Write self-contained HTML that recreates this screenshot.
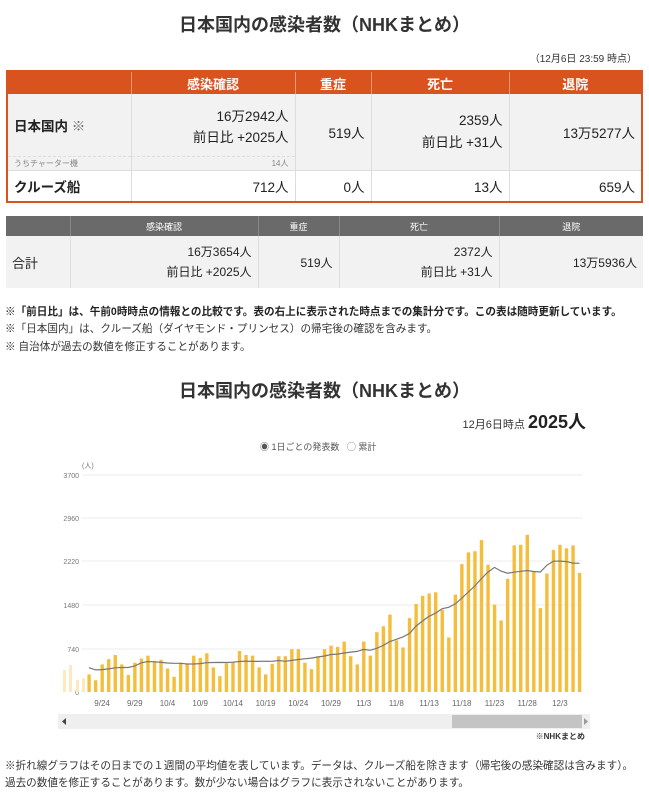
<!DOCTYPE html>
<html><head><meta charset="utf-8">
<style>
*{margin:0;padding:0;box-sizing:border-box}
body{width:649px;height:794px;background:#fff;font-family:"Liberation Sans","Noto Sans CJK JP",sans-serif;color:#222;position:relative;overflow:hidden}
.a{position:absolute;white-space:nowrap}
table{border-collapse:collapse;position:absolute}
td{padding:0 6px}
.t1{left:6px;top:70px;width:637px;border:2px solid #d9531e}
.t1 th{background:#d9531e;color:#fff;font-size:13px;height:23px;border-left:1px solid #e9966e}
.t1 td{font-size:13.5px}
.t2{left:6px;top:216px;width:637px}
.t2 th{background:#6a6a6a;color:#fff;font-size:9px;height:20px;font-weight:normal;border-left:1px solid #888}
.r{text-align:right}
.g td{background:#f2f2f2;border-left:1px solid #ddd}
.w td{border-left:1px solid #ddd;border-top:1px solid #ddd}
.note{font-size:10.6px;color:#333}
</style></head><body>
<div class="a" style="left:0;width:649px;text-align:center;top:11px;font-size:18px;font-weight:bold;color:#333">日本国内の感染者数（NHKまとめ）</div>
<div class="a" style="right:12px;top:50px;font-size:10px;color:#333">（12月6日 23:59 時点）</div>

<table class="t1">
<tr><th style="width:124px;border-left:none"></th><th style="width:164px">感染確認</th><th style="width:76px">重症</th><th style="width:138px">死亡</th><th>退院</th></tr>
<tr class="g"><td style="height:62px;font-weight:bold;border-left:none">日本国内 <span style="font-weight:normal;color:#666">※</span></td>
<td class="r" style="line-height:21px;padding-top:4px">16万2942人<br>前日比 +2025人</td>
<td class="r" rowspan="2">519人</td>
<td class="r" rowspan="2" style="line-height:22px">2359人<br>前日比 +31人</td>
<td class="r" rowspan="2">13万5277人</td></tr>
<tr class="g"><td style="height:14px;font-size:8px;color:#888;border-left:none;border-top:1px dashed #ddd">うちチャーター機</td><td class="r" style="font-size:8px;color:#888;border-top:1px dashed #ddd">14人</td></tr>
<tr class="w"><td style="height:32px;font-weight:bold;border-left:none">クルーズ船</td><td class="r">712人</td><td class="r">0人</td><td class="r">13人</td><td class="r">659人</td></tr>
</table>

<table class="t2">
<tr><th style="width:64px;border-left:none"></th><th style="width:188px">感染確認</th><th style="width:81px">重症</th><th style="width:160px">死亡</th><th>退院</th></tr>
<tr class="g" style="font-size:12px"><td style="height:52px;border-left:none;font-weight:normal;font-size:13px">合計</td>
<td class="r" style="line-height:20px">16万3654人<br>前日比 +2025人</td><td class="r">519人</td><td class="r" style="line-height:20px">2372人<br>前日比 +31人</td><td class="r">13万5936人</td></tr>
</table>

<div class="a note" style="left:5px;top:304px;font-weight:bold;color:#222">※「前日比」は、午前0時時点の情報との比較です。表の右上に表示された時点までの集計分です。この表は随時更新しています。</div>
<div class="a note" style="left:5px;top:321px">※「日本国内」は、クルーズ船（ダイヤモンド・プリンセス）の帰宅後の確認を含みます。</div>
<div class="a note" style="left:5px;top:339px">※ 自治体が過去の数値を修正することがあります。</div>

<div class="a" style="left:0;width:649px;text-align:center;top:377px;font-size:18px;font-weight:bold;color:#333">日本国内の感染者数（NHKまとめ）</div>
<div class="a" style="right:63px;top:411px;font-size:11px;color:#333;line-height:22px">12月6日時点 <span style="font-size:18px;font-weight:bold;color:#222">2025人</span></div>
<div class="a" style="left:260px;top:440px;font-size:9px;color:#555">◉ 1日ごとの発表数 &nbsp; ◯ 累計</div>

<svg class="a" style="left:0;top:0" width="649" height="794" id="ch">
<g font-family="Liberation Sans" font-size="7" fill="#777">
<text x="82" y="468">(人)</text>
<text x="79" y="478" text-anchor="end">3700</text>
<text x="79" y="521" text-anchor="end">2960</text>
<text x="79" y="564" text-anchor="end">2220</text>
<text x="79" y="608" text-anchor="end">1480</text>
<text x="79" y="652" text-anchor="end">740</text>
<text x="79" y="695" text-anchor="end">0</text>
</g>
<g stroke="#eee" stroke-width="1">
<line x1="82" y1="475" x2="583" y2="475"/><line x1="82" y1="518" x2="583" y2="518"/><line x1="82" y1="561" x2="583" y2="561"/><line x1="82" y1="605" x2="583" y2="605"/><line x1="82" y1="649" x2="583" y2="649"/>
</g>
<g fill="#fbe9c0"><rect x="63" y="670" width="3" height="22"/><rect x="69" y="665" width="3" height="27"/><rect x="76" y="680" width="3" height="12"/><rect x="82" y="678" width="3" height="14"/></g>
<g id="bars" fill="#f5bd3c"></g>
<polyline id="ln" fill="none" stroke="#777" stroke-width="1.2"/>
<g font-family="Liberation Sans" font-size="8" fill="#666" id="xl"></g>
<rect x="58" y="714" width="532" height="15" fill="#efefef"/>
<rect x="452" y="715" width="130" height="13" fill="#c4c4c4"/>
<polygon points="66,718 62,721.5 66,725" fill="#444"/>
<polygon points="584,718 588,721.5 584,725" fill="#999"/>
<text x="585" y="739" text-anchor="end" font-family="Liberation Sans,Noto Sans CJK JP" font-size="8" font-weight="bold" fill="#333">※NHKまとめ</text>
</svg>

<div class="a note" style="left:5px;top:758px">※折れ線グラフはその日までの１週間の平均値を表しています。データは、クルーズ船を除きます（帰宅後の感染確認は含みます）。</div>
<div class="a note" style="left:5px;top:775px">過去の数値を修正することがあります。数が少ない場合はグラフに表示されないことがあります。</div>

<script>
var v=[300,200,470,560,630,470,290,500,570,620,530,550,400,260,500,480,620,580,660,420,270,490,520,700,630,620,420,300,480,610,610,730,730,500,390,610,730,790,770,860,610,470,860,620,1020,1120,1320,880,760,1260,1500,1640,1680,1700,1400,930,1660,2180,2380,2400,2590,2170,1490,1220,1930,2500,2510,2680,2050,1430,2020,2420,2510,2450,2500,2030];
var ns="http://www.w3.org/2000/svg",b=document.getElementById('bars'),pts=[],pre=[480,460,440,470,500,430,300];
function X(i){return 89+i*6.54}
function Y(val){return 692-val/3700*217}
for(var i=0;i<v.length;i++){var r=document.createElementNS(ns,'rect');r.setAttribute('x',X(i)-1.6);r.setAttribute('width',3.4);r.setAttribute('y',Y(v[i]));r.setAttribute('height',692-Y(v[i]));b.appendChild(r);
var s=0;for(var k=i-6;k<=i;k++){s+=k<0?pre[k+7]:v[k]}pts.push(X(i)+','+Y(s/7).toFixed(1));}
document.getElementById('ln').setAttribute('points',pts.join(' '));
var lb=['9/24','9/29','10/4','10/9','10/14','10/19','10/24','10/29','11/3','11/8','11/13','11/18','11/23','11/28','12/3'],xl=document.getElementById('xl');
for(var j=0;j<lb.length;j++){var t=document.createElementNS(ns,'text');t.setAttribute('x',X(2+j*5));t.setAttribute('y',706);t.setAttribute('text-anchor','middle');t.textContent=lb[j];xl.appendChild(t);}
</script>
</body></html>
